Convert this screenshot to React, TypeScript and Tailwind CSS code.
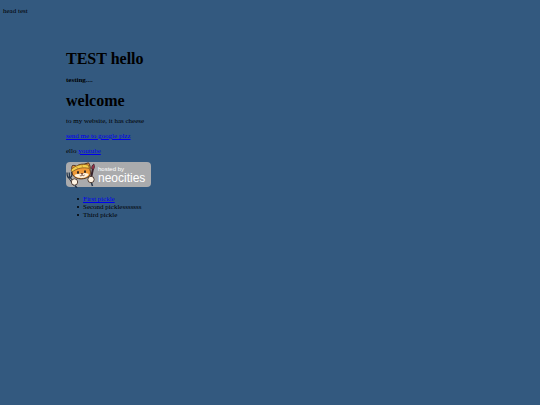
const pickles = [
  { name: 'First pickle', href: '#first' },
  { name: 'Second picklesssssss' },
  { name: 'Third pickle' },
];

const NeocitiesBadge = () => (
  <svg width="85" height="26" viewBox="0 0 85 26" role="img" aria-label="hosted by neocities">
    <rect width="85" height="25" rx="4" fill="#aaabad" />
    {/* Left arm and fork */}
    <path d="M3.500 15.500 8.500 23" stroke="#222b38" strokeWidth="2.400" />
    <path d="M1 10.500c0 3.500.8 5.700 2.800 5.200S6.500 13 5.500 10M3.200 10.500l.4 5" fill="none" stroke="#26364a" strokeWidth="1.300" />
    <path d="M4 16.500 8 22" stroke="#c3d0da" strokeWidth=".9" />
    {/* Right arm and brush */}
    <path d="M25 16 27 6.500" stroke="#37232b" strokeWidth="2" />
    <path d="M25.800 7c-.5-2 .4-4 2-5 1 2 .8 4-.5 5.500Z" fill="#a2304a" stroke="#37232b" strokeWidth=".8" />
    {/* Head */}
    <path d="M6.500 9C5.500 6.500 5.500 5 6.500 3.500c1.800-.3 3 .2 4.300 1C12.500 2.500 15 2 18 2.200L22.500.8c1.700 2.200 2 5 1.500 7 1.200 4 0 6.500-3.500 8-4 1.700-9 1.400-12-1-2.300-1.800-2.800-3.800-2-5.800Z" fill="#f09a38" stroke="#4a2d1c" strokeWidth="1" />
    <path d="M5 8C8.500 3.800 15.500 1 22.500 3.200l.8 3.300C17 4.800 11 6.300 6 10Z" fill="#f5cf4b" stroke="#80581f" strokeWidth=".8" />
    <path d="M10.500 4.800 12 7M16 3.200l.5 2.500" stroke="#b77824" strokeWidth=".7" />
    <path d="M8.500 13c2.500-1.200 4-.5 6-1.400 3-1 5.500-1 8.300.4-1 2.600-3.800 4-7.300 4s-6-.8-7-3Z" fill="#fff3df" />
    <ellipse cx="12" cy="10.500" rx="1" ry="1.400" fill="#302621" />
    <ellipse cx="19" cy="9.700" rx="1" ry="1.400" fill="#302621" />
    <path d="M15 11.500h2l-1 1.200ZM13.800 13.300c1 1 2 .6 2.300-.4.700 1 1.800 1 2.500.1" fill="none" stroke="#663322" strokeWidth=".8" />
    {/* Paws */}
    <circle cx="8.500" cy="20" r="3.200" fill="#fff4e3" stroke="#443027" strokeWidth=".9" />
    <circle cx="25" cy="17.500" r="3.200" fill="#fff4e3" stroke="#443027" strokeWidth=".9" />
    <path d="M9 23.500 11 26M25.500 21l1 3" stroke="#26364a" strokeWidth="1.500" />
    <text x="32" y="9" fontFamily="Liberation Sans, sans-serif" fontSize="6" fill="#fff">hosted by</text>
    <text x="32" y="20" fontFamily="Liberation Sans, sans-serif" fontSize="12" fill="#fff">neocities</text>
  </svg>
);

const App = () => {
  return (
    <div className="min-h-screen bg-[#33597f] pt-[7px] font-['Georgia','Liberation_Serif',serif] text-[7px] leading-[8px] text-black">
      <header className="px-[3px]">head test</header>

      <main className="mx-[66px] mt-9">
        <h1 className="text-[16px] leading-4 font-bold">TEST hello</h1>
        <p className="mt-[9px] font-bold">testing....</p>
        <h1 className="mt-[9px] text-[16px] leading-4 font-bold">welcome</h1>
        <p className="mt-2">to my website, it has cheese</p>
        <p className="mt-[7px]">
          <a href="#google" className="text-[#0000ee] underline">send me to google plzz</a>
        </p>
        <p className="mt-[7px]">
          ello <a href="#youtube" className="text-[#0000ee] underline">youtube</a>
        </p>
        <a href="#neocities" className="mt-[7px] block w-fit">
          <NeocitiesBadge />
        </a>
        <ul className="mt-[7px] pl-[11px]">
          {pickles.map((pickle) => (
            <li key={pickle.name} className="flex items-center gap-1 before:size-[2px] before:rounded-full before:bg-black">
              {pickle.href ? (
                <a href={pickle.href} className="text-[#0000ee] underline">{pickle.name}</a>
              ) : (
                pickle.name
              )}
            </li>
          ))}
        </ul>
      </main>
    </div>
  );
};

export default App;
